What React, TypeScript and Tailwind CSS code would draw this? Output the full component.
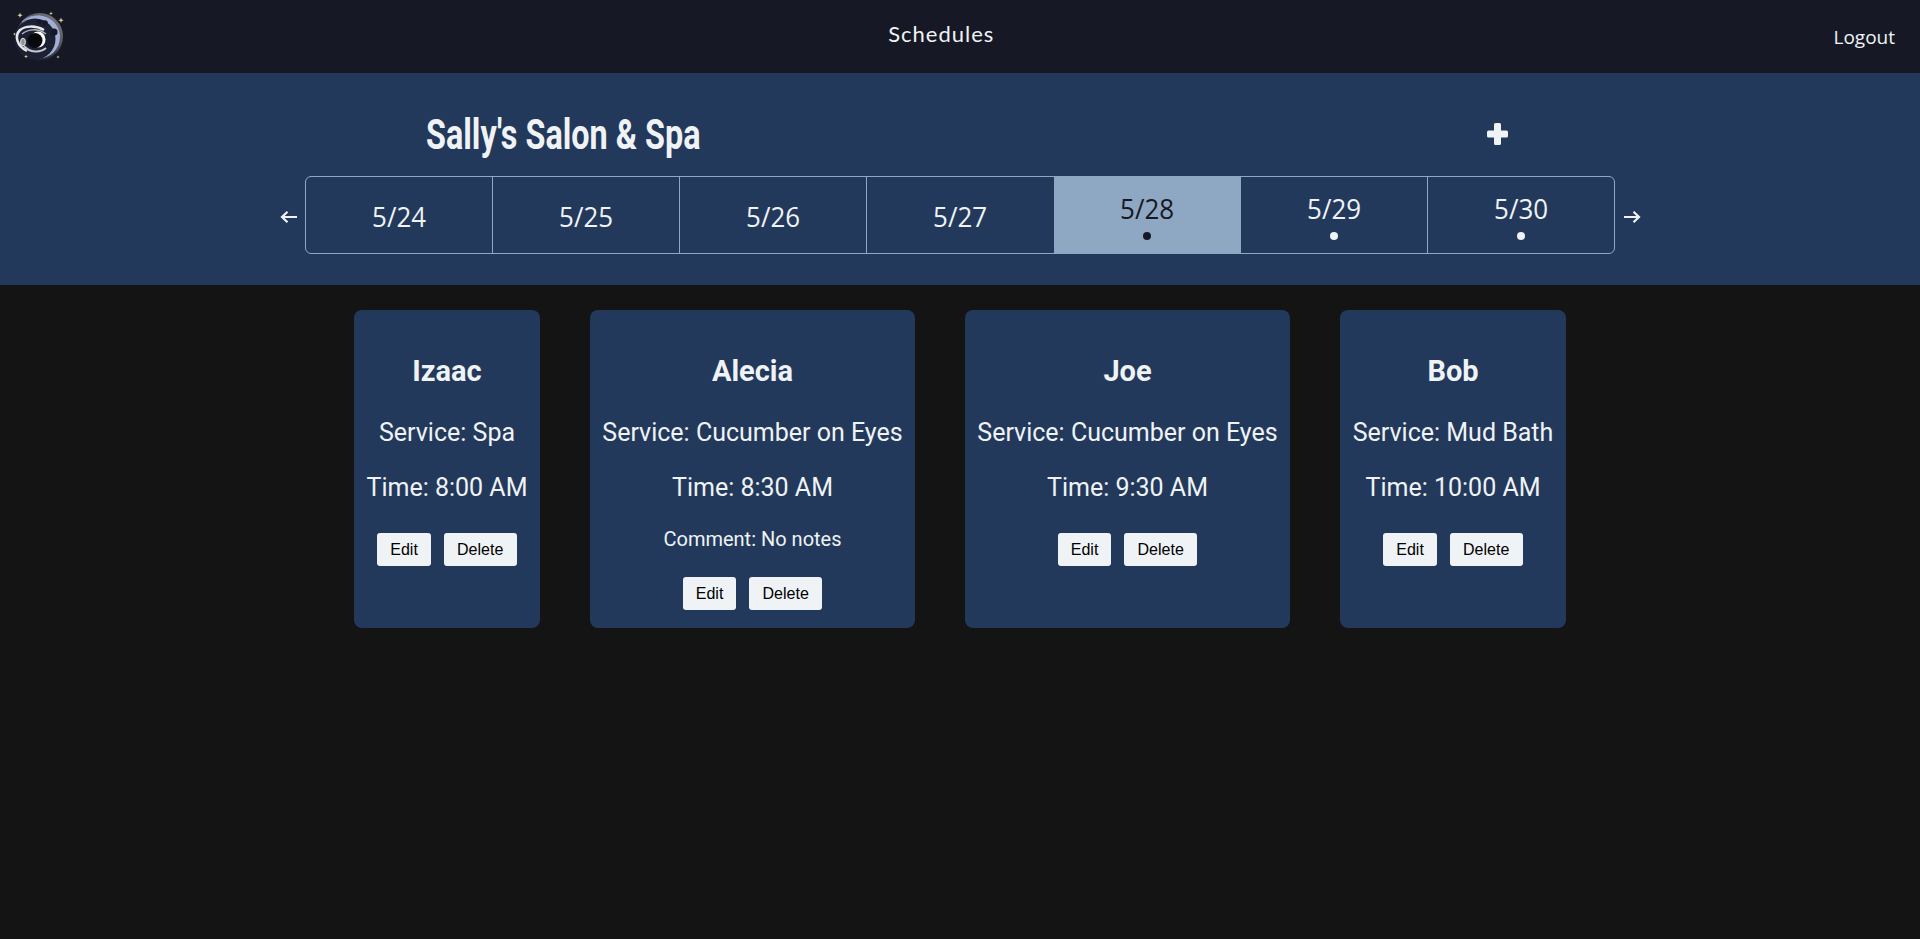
const days = [
  { label: "5/24" },
  { label: "5/25" },
  { label: "5/26" },
  { label: "5/27" },
  { label: "5/28", active: true, dot: true },
  { label: "5/29", dot: true },
  { label: "5/30", dot: true },
];

const cards = [
  { name: "Izaac", service: "Spa", time: "8:00 AM", width: "w-[186px]" },
  { name: "Alecia", service: "Cucumber on Eyes", time: "8:30 AM", comment: "No notes", width: "w-[325px]" },
  { name: "Joe", service: "Cucumber on Eyes", time: "9:30 AM", width: "w-[325px]" },
  { name: "Bob", service: "Mud Bath", time: "10:00 AM", width: "w-[226px]" },
];

function Logo() {
  return (
    <svg viewBox="0 0 80 73" className="block h-[73px] w-[80px] shrink-0">
      <defs>
        <linearGradient id="rim" x1="0.9" y1="0.1" x2="0.2" y2="0.9">
          <stop offset="0" stopColor="#77787c" />
          <stop offset="0.65" stopColor="#3a3c44" />
          <stop offset="1" stopColor="#161925" />
        </linearGradient>
      </defs>
      <circle cx="39.5" cy="36.5" r="23.5" fill="url(#rim)" />
      <circle cx="38.5" cy="37" r="21.5" fill="#a3aed6" />
      <circle cx="35" cy="39" r="20.5" fill="#1c2035" />
      <path d="M22 22C28 16 36 15 44 17" stroke="#a3aed6" strokeWidth="1" fill="none" />
      <circle cx="39" cy="22" r="2.4" fill="#161925" />
      <circle cx="45" cy="23" r="2.8" fill="#161925" />
      <circle cx="54" cy="32" r="3.6" fill="#161925" />
      <path d="M27 51C17 46 14 36 20 30C25 26 35 25 44 30" stroke="#e6e7ea" strokeWidth="2.5" fill="none" />
      <path d="M22 34C28 29 38 28 46 34" stroke="#b8b9be" strokeWidth="1.5" fill="none" />
      <path d="M24 46C30 53 40 53 46 48" stroke="#c9cace" strokeWidth="2" fill="none" />
      <ellipse cx="23" cy="42" rx="2.400" ry="3.800" fill="#8f9096" stroke="#e6e7ea" />
      <ellipse cx="38" cy="39.500" rx="7.500" ry="8" fill="#fafafa" />
      <ellipse cx="35" cy="40.500" rx="7.500" ry="7.500" fill="#08090d" />
      <g fill="#e3d59a">
        <path d="M20 12.5l.7 2 2 .7-2 .7-.7 2-.7-2-2-.7 2-.7z" />
        <path d="M51 11.5l.5 1.500 1.500.5-1.500.5-.5 1.500-.5-1.500-1.500-.5 1.500-.5z" />
        <path d="M61 17.500l.7 2 2 .7-2 .7-.7 2-.7-2-2-.7 2-.7z" />
        <path d="M14.500 32.500l.4 1.100 1.100.4-1.100.4-.4 1.100-.4-1.100-1.100-.4 1.100-.4z" />
        <path d="M26 54.500l.5 1.500 1.500.5-1.500.5-.5 1.500-.5-1.500-1.500-.5 1.500-.5z" />
        <path d="M58 55.500l.4 1.100 1.100.4-1.100.4-.4 1.100-.4-1.100-1.100-.4 1.100-.4z" />
      </g>
    </svg>
  );
}

function Header() {
  return (
    <header className="flex h-[73px] items-center justify-between bg-[#161925] text-[#eff3f6]">
      <Logo />
      <div className="mr-[31px] pb-[6px] font-['Lato',sans-serif] text-[22px] tracking-[1px]">Schedules</div>
      <div className="pr-[25px] pt-[1px] font-['Open_Sans',sans-serif] text-[19px]">Logout</div>
    </header>
  );
}

function Arrow({ flip }: { flip?: boolean }) {
  return (
    <svg
      viewBox="0 0 18 12"
      className={`absolute top-[35px] h-[12px] w-[18px] ${flip ? "right-[-26px] rotate-180" : "left-[-25px]"}`}
      fill="none"
      stroke="currentColor"
      strokeWidth="2.2"
    >
      <path d="M2 6H17M7.500 .8L2 6l5.500 5.200" />
    </svg>
  );
}

function Banner() {
  return (
    <section className="h-[212px] bg-[#23395b] text-[#eff3f6]">
      <div className="mx-auto w-[1310px]">
        <div className="flex h-[103px] items-center justify-between pl-[121px] pr-[107px] pt-[19px]">
          <h1 className="origin-left scale-x-[0.753] text-[43px] font-bold leading-[50px]">Sally's Salon &amp; Spa</h1>
          <svg viewBox="0 0 21 22" className="h-[22px] w-[21px]" fill="currentColor">
            <path d="M7 1.500A1.500 1.500 0 0 1 8.500 0h4A1.500 1.500 0 0 1 14 1.500V7.500h5.500A1.500 1.500 0 0 1 21 9v4a1.500 1.500 0 0 1-1.500 1.500H14v6A1.500 1.500 0 0 1 12.500 22h-4A1.500 1.500 0 0 1 7 20.500v-6H1.500A1.500 1.500 0 0 1 0 13V9a1.500 1.500 0 0 1 1.500-1.500H7z" />
          </svg>
        </div>
        <div className="relative">
          <Arrow />
          <div className="flex h-[78px] overflow-hidden rounded-[6px] border border-[#8ea8c3]">
            {days.map((day, i) => (
              <div
                key={day.label}
                className={`flex flex-1 flex-col items-center justify-center font-['Open_Sans',sans-serif] text-[27px] ${
                  i > 0 && !day.active ? "border-l border-[#8ea8c3]" : ""
                } ${day.active ? "bg-[#8ea8c3] text-[#161925]" : ""} ${day.dot ? "pt-[2px]" : ""}`}
              >
                <span className={`inline-block scale-x-[0.96] leading-[34px] ${day.dot ? "" : "pt-[3px]"}`}>{day.label}</span>
                {day.dot && (
                  <span className={`mt-[6px] h-[8px] w-[8px] rounded-full ${day.active ? "bg-[#161925]" : "bg-[#eff3f6]"}`} />
                )}
              </div>
            ))}
          </div>
          <Arrow flip />
        </div>
      </div>
    </section>
  );
}

function Card({ name, service, time, comment, width }: { name: string; service: string; time: string; comment?: string; width: string }) {
  return (
    <div className={`flex h-[318px] flex-col items-center rounded-[8px] bg-[#23395b] pt-[43px] text-[#eff3f6] ${width}`}>
      <h2 className="text-[29px] font-bold leading-[36px]">{name}</h2>
      <p className="mt-[30px] text-[25px] leading-[28px]">Service: {service}</p>
      <p className="mt-[27px] text-[25px] leading-[28px]">Time: {time}</p>
      {comment && <p className="mt-[25px] text-[20px] leading-[24px]">Comment: {comment}</p>}
      <div className={`flex gap-[12.8px] font-['Liberation_Sans',sans-serif] text-[16px] text-black ${comment ? "mt-[26px]" : "mt-[31px]"}`}>
        <button className="h-[33px] w-[53.6px] rounded-[3px] bg-[#eff3f6]">Edit</button>
        <button className="h-[33px] w-[73px] rounded-[3px] bg-[#eff3f6]">Delete</button>
      </div>
    </div>
  );
}

export default function App() {
  return (
    <div className="min-h-[939px] bg-[#141414] font-['Roboto',sans-serif]">
      <Header />
      <Banner />
      <main className="flex justify-center gap-[50px] pt-[25px]">
        {cards.map((card) => (
          <Card key={card.name} {...card} />
        ))}
      </main>
    </div>
  );
}
